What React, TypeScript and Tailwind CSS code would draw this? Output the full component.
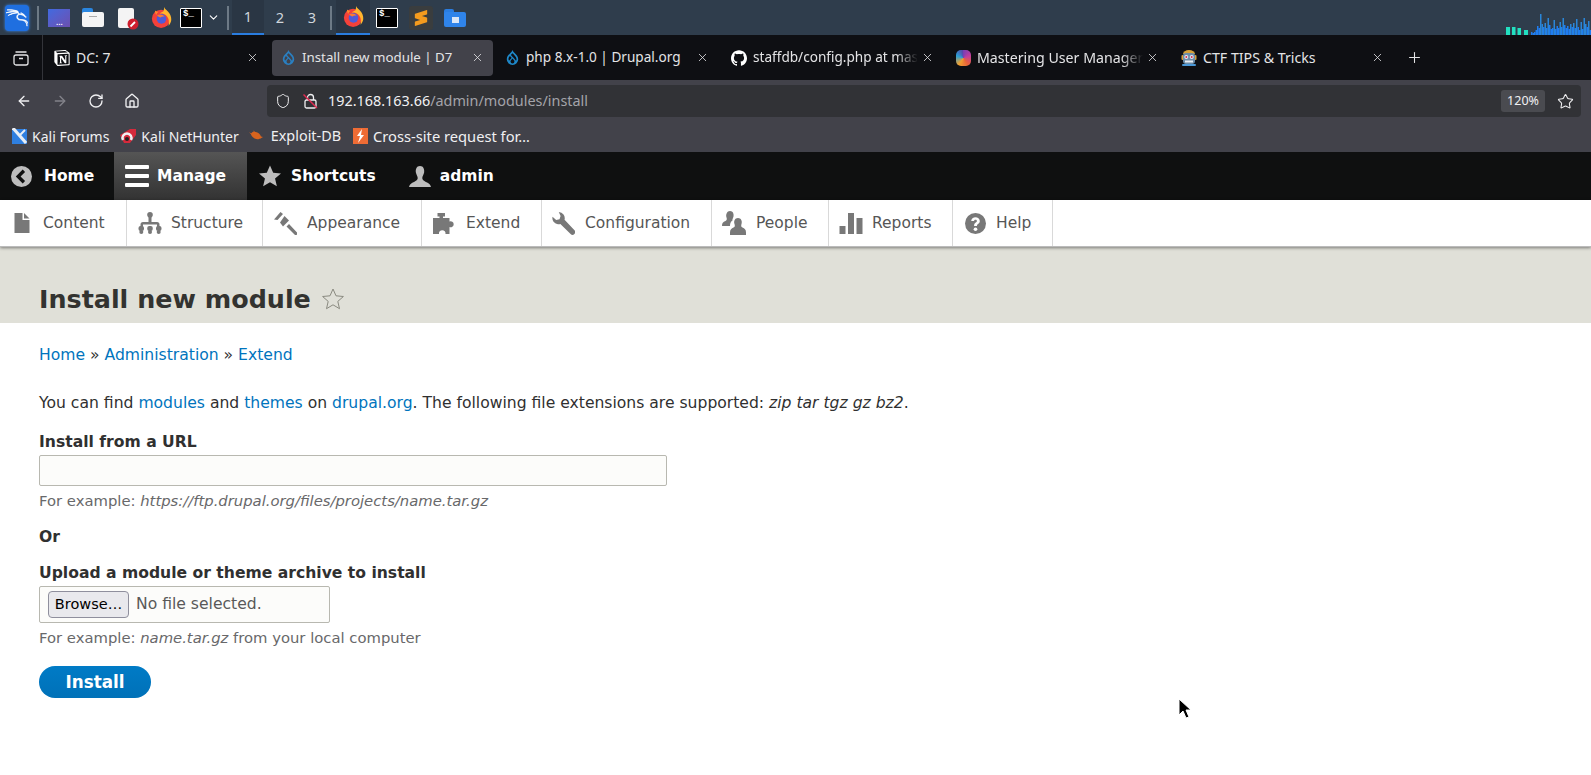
import React from 'react'
import { ArrowLeft, ArrowRight, RotateCw, Home, Shield, Star, X, Plus, ChevronDown } from 'lucide-react'
import { SiNotion, SiGithub, SiDrupal, SiSublimetext, SiKalilinux } from 'react-icons/si'

const Firefox = ({ size = 21 }: { size?: number }) => (
  <svg width={size} height={size} viewBox="0 0 24 24" className="shrink-0">
    <circle cx="11.500" cy="13.500" r="10.500" fill="#f4413a" />
    <path d="M15 0c1 3 4 4 6 7 2 3 2.500 6 2 9-.5 2-1.500 4-3 5.500 1-5 .5-9-3-12-2-2-5-2.500-7-2 1.500-1.500 3-2 4-2.500 1-2 1-3.500 1-5z" fill="#ffb52e" />
    <path d="M4.500 4c1 1 2.500 1.500 4 1.500-1 1-2 2-2.500 3.500-1-1-1.500-3-1.500-5z" fill="#ff8a2a" />
    <circle cx="12" cy="13.500" r="5.500" fill="#4f5bd8" />
    <path d="M7 9.500c3-2 7-1 8.500 1.500-2-.5-3.500 0-4.500 1-1.500 0-3-1-4-2.500z" fill="#ff7a2e" />
  </svg>
)

const Terminal = () => (
  <div className="relative h-[20px] w-[22px] shrink-0 rounded-[1px] border border-white bg-black">
    <span className="absolute left-[2px] top-[-1px] font-['Liberation_Mono',monospace] text-[9px] font-bold leading-[12px] text-white">$_</span>
  </div>
)

const Divider = ({ className = '' }: { className?: string }) => <div className={`h-[24px] w-[2px] shrink-0 bg-[#6d7a86] ${className}`} />

const StruckLock = () => (
  <svg width="15" height="16" viewBox="0 0 15 16" fill="none" stroke="#f0f0f2" strokeWidth="1.300" className="ml-[12px] shrink-0">
    <rect x="2" y="7" width="11" height="8" rx="1.500" />
    <path d="M4.500 7V4.500a3 3 0 0 1 6 0V7" />
    <path d="M0.500 1.500 14 15" stroke="#e22850" strokeWidth="1.500" />
  </svg>
)

const Robot = () => (
  <svg width="16" height="16" viewBox="0 0 16 16" className="shrink-0">
    <path d="M2 4a6 4 0 0 1 12 0" fill="#d8a238" />
    <rect x="0.500" y="5" width="2" height="5" rx="1" fill="#d8a238" /><rect x="13.500" y="5" width="2" height="5" rx="1" fill="#d8a238" />
    <rect x="2" y="3" width="12" height="11" rx="3" fill="#6c8ca8" />
    <circle cx="5.300" cy="7" r="2" fill="#e8ecf2" /><circle cx="10.700" cy="7" r="2" fill="#e8ecf2" />
    <circle cx="5.300" cy="7" r="1" fill="#d8304a" /><circle cx="10.700" cy="7" r="1" fill="#d8304a" />
    <rect x="4" y="10.500" width="8" height="2" fill="#e8ecf2" />
    <rect x="1" y="14" width="14" height="2" rx="1" fill="#4a98d8" />
  </svg>
)

const tabs = [
  { title: 'DC: 7', icon: <SiNotion size={16} className="-ml-[2px] shrink-0 text-white" />, text: 'text-[14px]' },
  { title: 'Install new module | D7', icon: <SiDrupal size={15} className="shrink-0 text-[#2a7fc1]" />, text: 'text-[13.300px]', active: true },
  { title: 'php 8.x-1.0 | Drupal.org', icon: <SiDrupal size={15} className="-ml-[1px] shrink-0 text-[#1e88c9]" />, text: 'text-[13.600px]' },
  { title: 'staffdb/config.php at mas', icon: <SiGithub size={16} className="shrink-0 text-white" />, text: 'text-[13.600px]', fade: true },
  { title: 'Mastering User Managem', icon: <span className="h-[16px] w-[15px] shrink-0 rounded-[5px] bg-[conic-gradient(#7a3fb5,#c13f9c,#e8623a,#f0a030,#2a9fd6,#5a3fa5)]" />, text: 'text-[14.200px]', fade: true },
  { title: 'CTF TIPS & Tricks', icon: <Robot />, text: 'text-[14.200px]' },
]

const bookmarks = [
  {
    label: 'Kali Forums',
    className: 'gap-[5px] text-[14px]',
    icon: (
      <svg width="15" height="16" viewBox="0 0 15 16">
        <rect y="1" width="15" height="15" fill="#2f7fe0" />
        <path d="M1 0l13 15" stroke="#e8eef5" strokeWidth="3" /><path d="M13 2 8 7" stroke="#e8eef5" strokeWidth="2" />
      </svg>
    ),
  },
  {
    label: 'Kali NetHunter',
    className: 'ml-[11px] gap-[5px] text-[14px]',
    icon: (
      <svg width="16" height="14" viewBox="0 0 16 14">
        <path d="M0 6 10 0h6v6l-6 8H4z" fill="#d42a3c" />
        <path d="M3 11a4.500 4.500 0 1 1 8 0" fill="none" stroke="#f0f0f2" strokeWidth="2.500" /><circle cx="7" cy="10" r="2" fill="#222" />
      </svg>
    ),
  },
  {
    label: 'Exploit-DB',
    className: 'ml-[10px] gap-[8px] text-[14.400px]',
    icon: (
      <svg width="14" height="11" viewBox="0 0 15 11" fill="#d9641e">
        <ellipse cx="7.500" cy="5.500" rx="5.500" ry="3.500" transform="rotate(25 7.500 5.500)" /><path d="M0 2l4 2-1 1zM15 7l-4-1 1 3zM5 0l2 3H5z" />
      </svg>
    ),
  },
  {
    label: 'Cross-site request for…',
    className: 'ml-[12px] gap-[5px] text-[14.700px]',
    icon: (
      <svg width="15" height="16" viewBox="0 0 15 16">
        <rect width="15" height="16" fill="#ef6c35" /><path d="M9 1 4 8h3l-2 7 6-8H8z" fill="#fff" />
      </svg>
    ),
  },
]

const graphBars = [3, 2, 3, 5, 9, 7, 21, 11, 8, 12, 7, 17, 10, 6, 7, 15, 6, 9, 7, 13, 8, 17, 10, 7, 9, 6, 11, 8, 12, 7, 16, 8, 5, 13, 6, 17, 11, 8, 14, 5]

const IconContent = () => (
  <svg width="16" height="20" viewBox="0 0 15 20" fill="#787878"><path d="M0 0h8v7h7v13H0z" /><path d="M9.500 0 15 5.500H9.500z" /></svg>
)
const IconStructure = () => (
  <svg width="24" height="22" viewBox="0 0 23 22" fill="#787878">
    <circle cx="11.500" cy="2.800" r="2.800" /><rect x="10" y="4" width="3" height="7" />
    <path d="M2 15v-2.500a2.500 2.500 0 0 1 2.500-2.500h14a2.500 2.500 0 0 1 2.500 2.500V15h-2.500v-2.500h-14V15z" />
    <rect x="0" y="14" width="5.500" height="5" rx="2" /><rect x="8.750" y="14" width="5.500" height="5" rx="2" /><rect x="17.500" y="14" width="5.500" height="5" rx="2" />
    <circle cx="2.800" cy="20" r="2" /><circle cx="11.500" cy="20" r="2" /><circle cx="20.200" cy="20" r="2" />
  </svg>
)
const IconAppearance = () => (
  <svg width="23" height="23" viewBox="0 0 23 23" fill="#787878">
    <path d="M0 7.500 6.500 0l2.500 2-5.500 6z" />
    <path d="M6 10.500 10.500 4l4.500 4.500-6 6z" />
    <path d="M12.500 14.500 15 12l8 8.500a1.600 1.600 0 0 1-2.500 2z" />
  </svg>
)
const IconExtend = () => (
  <svg width="23" height="21" viewBox="0 0 23 21" fill="#787878">
    <path d="M0 5h6.500V3.500H4.500V0h7.500v3.500h-2V5h6.500v3.500a3 3 0 1 1 0 5.500V21h-4a3.300 3.300 0 1 0-6.500 0H0z" />
  </svg>
)
const IconConfig = () => (
  <svg width="23" height="23" viewBox="0 0 22 22" fill="#787878">
    <path d="M6.500 0a6 6 0 0 1 5.500 7.500L21.500 17.500a2.500 2.500 0 0 1-3.700 3.500L8 11.500A6 6 0 0 1 .5 4.500l3.500 3.200L7.200 7l1-3.200z" />
  </svg>
)
const IconPeople = () => (
  <svg width="24" height="24" viewBox="0 0 24 24" fill="#787878">
    <path d="M8 0c3 0 4 3 3.500 5.500C11 7.500 10 8.500 10.500 9.500 9 10.500 8 12 8 15H0c0-3 1-4 3.500-5 1.500-.7 1.500-2 1-3.500C3.500 3.500 5 0 8 0z" />
    <path d="M16 7c3 0 4.500 3 3.500 6-.5 1.500-.5 3 1 3.500 2 1 3.500 2 3.500 5v2.500H8v-2.500c0-3 1.500-4 3.500-5 1.500-.5 1.500-2 1-3.500-1-3 .5-6 3.500-6z" />
  </svg>
)
const IconReports = () => (
  <svg width="24" height="21" viewBox="0 0 23 21" fill="#787878"><rect x="0" y="13" width="6" height="8" /><rect x="8.500" y="0" width="6" height="21" /><rect x="17" y="5" width="6" height="16" /></svg>
)
const IconHelp = () => (
  <svg width="21" height="21" viewBox="0 0 22 22"><circle cx="11" cy="11" r="11" fill="#787878" /><path d="M6.500 8.500c0-5.500 9-5.500 9 0 0 3-3 3-3 5h-3c0-3.500 3-3.500 3-5 0-2-3-2-3 0z" fill="#fff" /><circle cx="11" cy="17" r="1.900" fill="#fff" /></svg>
)

const trayItems = [
  { label: 'Content', icon: <IconContent />, width: 'w-[127px]', gap: 'pl-[14px] gap-[13px]' },
  { label: 'Structure', icon: <IconStructure />, width: 'w-[136px]', gap: 'pl-[11px] gap-[9px]' },
  { label: 'Appearance', icon: <IconAppearance />, width: 'w-[159px]', gap: 'pl-[11px] gap-[10px]' },
  { label: 'Extend', icon: <IconExtend />, width: 'w-[120px]', gap: 'pl-[11px] gap-[10px]' },
  { label: 'Configuration', icon: <IconConfig />, width: 'w-[170px]', gap: 'pl-[10px] gap-[10px]' },
  { label: 'People', icon: <IconPeople />, width: 'w-[117px]', gap: 'pl-[10px] gap-[10px]' },
  { label: 'Reports', icon: <IconReports />, width: 'w-[124px]', gap: 'pl-[10px] gap-[9px]' },
  { label: 'Help', icon: <IconHelp />, width: 'w-[100px]', gap: 'pl-[12px] gap-[10px]' },
]

const App: React.FC = () => {
  return (
    <div className="flex h-[775px] flex-col overflow-hidden bg-white font-['DejaVu_Sans',sans-serif]">
      {/* Desktop panel */}
      <div className="flex h-[35px] shrink-0 items-center bg-[#2f3d4c] pl-[5px]">
        <div className="flex h-[26px] w-[24px] shrink-0 items-center justify-center rounded-[4px] bg-[#1f6fe0] shadow-[0_0_3px_#3a8af0]">
          <SiKalilinux size={22} strokeWidth={0.8} className="text-white" />
        </div>
        <Divider className="ml-[8px]" />
        <div className="relative ml-[9px] h-[18px] w-[22px] shrink-0 bg-gradient-to-br from-[#3f6ae0] to-[#6a4fb0]">
          <span className="absolute bottom-[2px] left-[8px] text-[6px] font-bold leading-[4px] text-white">...</span>
        </div>
        <div className="relative ml-[12px] h-[19px] w-[22px] shrink-0">
          <div className="absolute left-0 top-0 h-[8px] w-[11px] rounded-t-[2px] bg-[#2a86e0]" />
          <div className="absolute bottom-0 left-0 h-[15px] w-[22px] rounded-[2px] bg-[#f4f4f4]" />
          <div className="absolute left-[7px] top-[8px] h-[1px] w-[8px] bg-[#aaa]" />
        </div>
        <div className="relative ml-[14px] h-[20px] w-[16px] shrink-0 rounded-[2px] bg-[#f4f4f4]">
          <svg width="12" height="12" viewBox="0 0 12 12" className="absolute -bottom-[2px] -right-[5px]">
            <circle cx="6" cy="6" r="5.500" fill="#cf1f2e" /><path d="M3.500 8.500 8 4" stroke="#fff" strokeWidth="1.800" />
          </svg>
        </div>
        <div className="ml-[17px]"><Firefox /></div>
        <div className="ml-[8px]"><Terminal /></div>
        <ChevronDown size={13} className="ml-[5px] shrink-0 text-white" />
        <Divider className="ml-[7px]" />
        <div className="ml-[3px] flex">
          {['1', '2', '3'].map((n, i) => (
            <div key={n} className={`flex h-[35px] w-[32px] items-center justify-center font-['Noto_Sans',sans-serif] text-[14.500px] text-[#d0d6dc] ${i === 0 ? 'border-b-2 border-[#2a7de0] bg-[#2a3644]' : ''}`}>{n}</div>
          ))}
        </div>
        <Divider className="ml-[2px]" />
        <div className="ml-[4px] flex h-[35px] w-[34px] items-center justify-center border-b-2 border-[#2a7de0] bg-[#2a3644]"><Firefox /></div>
        <div className="ml-[6px]"><Terminal /></div>
        <div className="ml-[11px] flex h-[24px] w-[24px] items-center justify-center rounded-[3px] bg-[#3a3d3e]"><SiSublimetext size={16} className="text-[#f49b1e]" /></div>
        <div className="relative ml-[11px] h-[18px] w-[22px]">
          <div className="absolute left-0 top-0 h-[6px] w-[10px] rounded-t-[2px] bg-[#2a7de0]" />
          <div className="absolute bottom-0 h-[15px] w-[22px] rounded-[2px] bg-[#2f84ea]" />
          <div className="absolute bottom-[4px] left-[8px] h-[6px] w-[7px] bg-[#dce8f8]" />
        </div>
        <svg width="85" height="22" viewBox="0 0 85 22" className="ml-auto self-end">
          <path d="M0 14h4v8H0zM6 14h3.500v8H6zM11.500 15h3.500v7h-3.500zM18 17h4v5h-4z" fill="#22e0c0" />
          {graphBars.map((h, i) => (
            <rect key={i} x={25 + i * 1.500} y={22 - h} width="1.500" height={h} fill={h > 10 ? '#2a86d8' : '#1f7df0'} />
          ))}
        </svg>
      </div>

      {/* Tab strip */}
      <div className="flex h-[45px] shrink-0 items-center bg-[#0e0f13] font-['Noto_Sans',sans-serif] text-[#e4e4e6]">
        <div className="mr-[4px] flex h-full w-[43px] shrink-0 items-center justify-center border-r border-[#33343a]">
          <svg width="16" height="16" viewBox="0 0 16 16" fill="none" stroke="#e4e4e6" strokeWidth="1.300">
            <rect x="1" y="5" width="14" height="10" rx="2" /><path d="M2.500 2h11M6 8.500h4" />
          </svg>
        </div>
        <div className="flex gap-[4px]">
          {tabs.map((tab) => (
            <div key={tab.title} className={`flex h-[36px] w-[221px] shrink-0 items-center gap-[6px] pl-[9px] pr-[9px] ${tab.text} ${tab.active ? 'rounded-[4px] bg-[#42424a]' : ''}`}>
              {tab.icon}
              <span className={`min-w-0 flex-1 whitespace-nowrap ${tab.fade ? '[mask-image:linear-gradient(to_left,transparent,black_22px)]' : ''}`}>{tab.title}</span>
              <X size={13} strokeWidth={1.500} className="-ml-[3px] shrink-0" />
            </div>
          ))}
        </div>
        <Plus size={17} strokeWidth={1.500} className="ml-[13px]" />
      </div>

      {/* Navigation toolbar */}
      <div className="flex h-[38px] shrink-0 items-start bg-[#42424a] pl-[16px] pr-[10px] pt-[5px] text-[#f0f0f2]">
        <div className="flex h-[32px] items-center">
          <ArrowLeft size={16} />
          <ArrowRight size={16} className="ml-[20px] text-[#83838a]" />
          <RotateCw size={16} className="ml-[20px]" />
          <Home size={16} className="ml-[20px]" />
        </div>
        <div className="ml-[127px] flex h-[32px] flex-1 items-center rounded-[4px] bg-[#313236] pl-[8px] pr-[7px] font-['Noto_Sans',sans-serif] text-[14.400px]">
          <Shield size={16} strokeWidth={1.500} className="shrink-0" />
          <StruckLock />
          <span className="ml-[10px]">192.168.163.66</span>
          <span className="text-[#a4a4aa]">/admin/modules/install</span>
          <span className="ml-auto flex h-[22px] w-[44px] items-center justify-center rounded-[3px] bg-[#4a4b50] text-[12.500px]">120%</span>
          <Star size={17} strokeWidth={1.500} className="ml-[12px]" />
        </div>
      </div>

      {/* Bookmarks */}
      <div className="flex h-[34px] shrink-0 items-center bg-[#42424a] pl-[12px] pt-[2px] font-['Noto_Sans',sans-serif] text-[#f0f0f2]">
        {bookmarks.map((b) => (
          <div key={b.label} className={`flex items-center ${b.className}`}>{b.icon}<span>{b.label}</span></div>
        ))}
      </div>

      {/* Admin toolbar */}
      <div className="flex h-[48px] shrink-0 items-center bg-[#0f1010] text-[15.500px] font-bold text-white">
        <div className="flex h-full w-[114px] items-center gap-[12px] pl-[11px]">
          <svg width="21" height="21" viewBox="0 0 22 22"><circle cx="11" cy="11" r="11" fill="#bdbdbd" /><path d="M13.500 5l-6 6 6 6" fill="none" stroke="#0f1010" strokeWidth="3.500" /></svg>
          <span className="pt-[1px]">Home</span>
        </div>
        <div className="flex h-full w-[133px] items-center gap-[8px] bg-gradient-to-b from-[#555] to-[#333] pl-[11px]">
          <svg width="24" height="22" viewBox="0 0 24 22" fill="#fff"><rect width="24" height="4" y="0" rx="1" /><rect width="24" height="4" y="9" rx="1" /><rect width="24" height="4" y="18" rx="1" /></svg>
          <span className="pt-[1px]">Manage</span>
        </div>
        <div className="ml-[12px] flex items-center gap-[10px]">
          <svg width="22" height="22" viewBox="0 0 24 23" fill="#bdbdbd"><path d="M12 0l3.500 8 8.500.700-6.500 5.500 2 8.500L12 18.200 4.500 22.700l2-8.500L0 8.700 8.500 8z" /></svg>
          <span className="pt-[1px]">Shortcuts</span>
        </div>
        <div className="ml-[33px] flex items-center gap-[9px]">
          <svg width="22" height="23" viewBox="0 0 24 23" fill="#bdbdbd"><path d="M12 0c4 0 5 4 4.500 7-.5 2.500-2 4-2 6 0 3 4 4 7 6 1.500 1 2 2 2.500 4H0c.5-2 1-3 2.500-4 3-2 7-3 7-6 0-2-1.500-3.500-2-6C7 4 8 0 12 0z" /></svg>
          <span className="pt-[1px]">admin</span>
        </div>
      </div>

      {/* Admin tray */}
      <div className="z-10 flex h-[47px] shrink-0 items-center border-b border-[#bbb] bg-white text-[#565656] shadow-[0_1px_3px_rgba(0,0,0,0.45)]">
        {trayItems.map((item) => (
          <div key={item.label} className={`flex h-full items-center border-r border-[#d9d9d9] text-[15.500px] ${item.width} ${item.gap}`}>
            {item.icon}
            <span className="pt-[1px]">{item.label}</span>
          </div>
        ))}
      </div>

      {/* Page header */}
      <div className="flex h-[76px] shrink-0 items-end bg-[#e0e0d8] pb-[6px] pl-[39px]">
        <h1 className="text-[25.400px] font-bold leading-[36px] text-[#333330]">Install new module</h1>
        <svg width="24" height="24" viewBox="0 0 24 24" fill="none" stroke="#8a8a80" className="mb-[6px] ml-[10px]"><path d="M12 2l3 6.800 7.400.7-5.600 4.900 1.700 7.300L12 17.800l-6.500 3.900 1.700-7.300L1.600 9.500 9 8.800z" /></svg>
      </div>

      {/* Content */}
      <div className="flex flex-col pl-[39px] text-[15.600px] text-[#303030]">
        <div className="mt-[22px] leading-[20px]">
          <a className="text-[#0074bd]">Home</a> » <a className="text-[#0074bd]">Administration</a> » <a className="text-[#0074bd]">Extend</a>
        </div>
        <p className="mt-[28px] leading-[20px]">
          You can find <a className="text-[#0074bd]">modules</a> and <a className="text-[#0074bd]">themes</a> on <a className="text-[#0074bd]">drupal.org</a>. The following file extensions are supported: <em>zip tar tgz gz bz2</em>.
        </p>
        <label className="mt-[19px] font-bold leading-[20px]">Install from a URL</label>
        <div className="mt-[3px] h-[31px] w-[628px] rounded-[2px] border border-[#b8b8b0] bg-[#fcfcfa]" />
        <div className="mt-[5px] text-[14.800px] leading-[20px] text-[#68686a]">For example: <em>https://ftp.drupal.org/files/projects/name.tar.gz</em></div>
        <div className="mt-[16px] font-bold leading-[20px]">Or</div>
        <label className="mt-[16px] font-bold leading-[20px]">Upload a module or theme archive to install</label>
        <div className="mt-[3px] flex h-[37px] w-[291px] items-center rounded-[2px] border border-[#b8b8b0] bg-[#fcfcfa] pl-[8px]">
          <span className="flex h-[27px] w-[81px] items-center justify-center rounded-[4px] border border-[#8f8f9d] bg-[#e9e9ed] pt-[1px] text-[14.500px] text-black">Browse…</span>
          <span className="ml-[7px] pt-[1px] text-[#595959]">No file selected.</span>
        </div>
        <div className="mt-[5px] text-[14.800px] leading-[20px] text-[#68686a]">For example: <em>name.tar.gz</em> from your local computer</div>
        <button className="mt-[18px] h-[32px] w-[112px] rounded-full bg-gradient-to-b from-[#007bc6] to-[#0071b8] pt-[1px] text-[16.800px] font-bold text-white">Install</button>
      </div>

      {/* Mouse pointer */}
      <svg width="14" height="22" viewBox="0 0 14 22" className="absolute left-[1178px] top-[698px]">
        <path d="M1 1v16l4-4 3 7 3-1-3-7h5z" fill="#000" stroke="#fff" strokeWidth="1" />
      </svg>
    </div>
  )
}

export default App
